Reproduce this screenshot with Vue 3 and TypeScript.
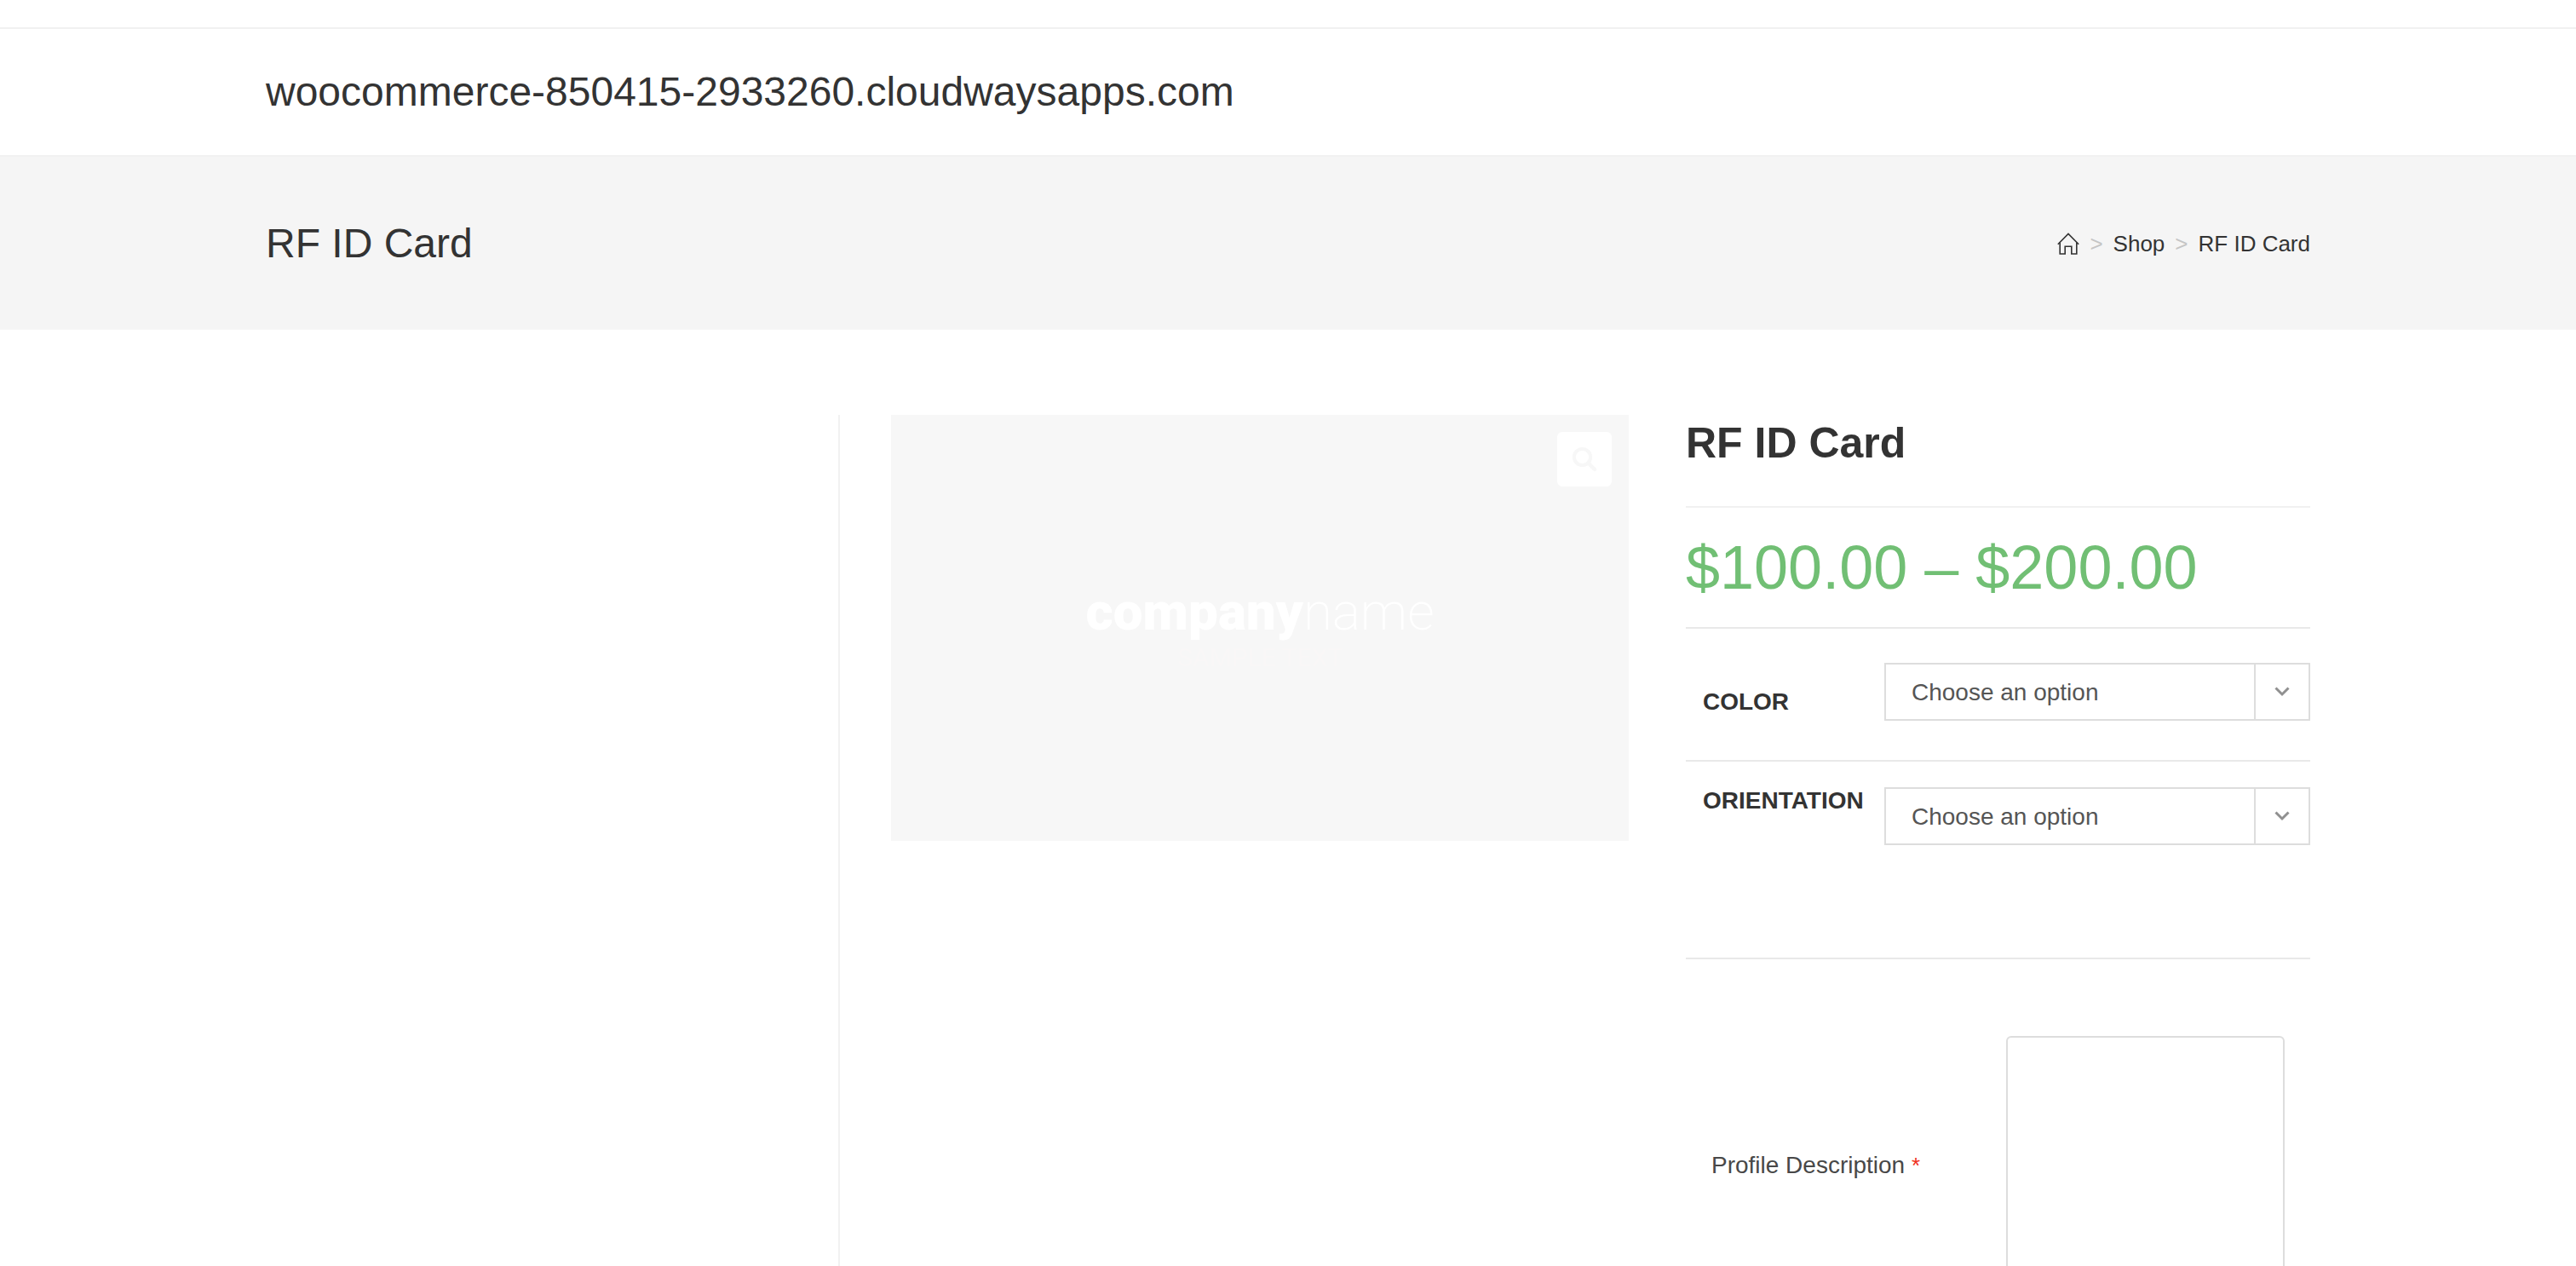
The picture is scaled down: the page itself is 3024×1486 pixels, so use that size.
<script setup lang="ts">
import { ref } from 'vue'

interface Attribute {
  id: string
  label: string
  options: string[]
}

const attributes: Attribute[] = [
  { id: 'color', label: 'COLOR', options: [] },
  { id: 'orientation', label: 'ORIENTATION', options: [] },
]

const selected = ref<Record<string, string>>({ color: '', orientation: '' })
const description = ref('')
</script>

<template>
  <div class="page">
    <div class="top-bar"></div>

    <header class="site-header">
      <div class="container">
        <a class="site-name" href="#">woocommerce-850415-2933260.cloudwaysapps.com</a>
      </div>
    </header>

    <section class="banner">
      <div class="container banner-inner">
        <h1 class="banner-title">RF ID Card</h1>
        <nav class="crumbs" aria-label="Breadcrumb">
          <a class="home" href="#" aria-label="Home">
            <svg width="26" height="26" viewBox="0 0 26 26" fill="none" stroke="#333" stroke-width="1.6">
              <path d="M0.8 13.8 13 1.4 25.2 13.8" />
              <path d="M3.2 11.6V25h6V16.2h7.6V25h6V11.6" />
            </svg>
          </a>
          <span class="sep">&gt;</span>
          <a href="#">Shop</a>
          <span class="sep">&gt;</span>
          <a href="#">RF ID Card</a>
        </nav>
      </div>
    </section>

    <div class="container columns">
      <aside class="sidebar"></aside>
      <main class="product">
        <div class="gallery">
          <div class="logo"><b>company</b><span>name</span></div>
          <div class="sample">SAMPLE TEXT</div>
          <button class="magnify" type="button" aria-label="Zoom image">
            <svg width="30" height="30" viewBox="0 0 30 30" fill="none" stroke="#f7f7f7">
              <circle cx="12.5" cy="12.5" r="9.6" stroke-width="4" />
              <path d="M19.5 19.5 27 27" stroke-width="4.5" stroke-linecap="round" />
            </svg>
          </button>
        </div>

        <div class="summary">
          <h2 class="product-title">RF ID Card</h2>
          <p class="price">$100.00 – $200.00</p>

          <form class="options">
            <div v-for="item in attributes" :key="item.id" class="row" :class="item.id">
              <label :for="item.id">{{ item.label }}</label>
              <div class="select-box">
                <select :id="item.id" v-model="selected[item.id]">
                  <option value="">Choose an option</option>
                  <option v-for="o in item.options" :key="o" :value="o">{{ o }}</option>
                </select>
                <span class="arrow">
                  <svg width="18" height="12" viewBox="0 0 18 12" fill="none" stroke="#909090" stroke-width="3">
                    <path d="M1.5 1.5 9 9 16.5 1.5" />
                  </svg>
                </span>
              </div>
            </div>

            <div class="profile">
              <label for="profile">Profile Description <span class="required">*</span></label>
              <textarea id="profile" v-model="description"></textarea>
            </div>
          </form>
        </div>
      </main>
    </div>
  </div>
</template>

<style>
body {
  background: #fff;
}
</style>

<style scoped>
.page {
  height: 100vh;
  overflow: hidden;
  display: flex;
  flex-direction: column;
  font-family: "Liberation Sans", Arial, sans-serif;
  font-size: 28px;
  line-height: 32px;
  color: #333;
}
.page * {
  box-sizing: border-box;
}
a {
  color: inherit;
  text-decoration: none;
}
.container {
  width: 100%;
  max-width: 2400px;
  margin: 0 auto;
}
.top-bar {
  flex: none;
  height: 34px;
  border-bottom: 2px solid #f1f1f1;
}
.site-header {
  flex: none;
  padding: 46px 0;
  border-bottom: 2px solid #f1f1f1;
}
.site-name {
  display: block;
  font-size: 48px;
  line-height: 56px;
}
.banner {
  flex: none;
  padding: 74px 0 73px;
  background: #f5f5f5;
}
.banner-inner {
  display: flex;
  justify-content: space-between;
  align-items: center;
}
.banner-title {
  margin: 0;
  font-size: 48px;
  line-height: 56px;
  font-weight: 400;
}
.crumbs {
  display: flex;
  align-items: center;
  gap: 12px;
  font-size: 26px;
}
.home svg {
  display: block;
}
.sep {
  color: #c5c5c5;
}
.columns {
  flex: 1;
  min-height: 0;
  display: flex;
  padding-top: 100px;
}
.sidebar {
  width: 28%;
}
.product {
  width: 72%;
  display: flex;
  justify-content: space-between;
  align-items: flex-start;
  padding-left: 60px;
  border-left: 2px solid #f1f1f1;
}
.gallery {
  position: relative;
  width: 52%;
  aspect-ratio: 866 / 500;
  display: flex;
  flex-direction: column;
  align-items: center;
  justify-content: center;
  gap: 6px;
  background: #f7f7f7;
  font-family: Roboto, sans-serif;
}
.logo {
  font-size: 62px;
  line-height: 64px;
  color: #fff;
}
.logo b {
  font-weight: 900;
}
.logo span {
  font-weight: 200;
}
.sample {
  font-size: 30px;
  color: #f9f7f7;
}
.magnify {
  position: absolute;
  top: 20px;
  right: 20px;
  width: 64px;
  height: 64px;
  padding: 0;
  display: flex;
  align-items: center;
  justify-content: center;
  border: 0;
  border-radius: 6px;
  background: #fff;
}
.summary {
  width: 44%;
}
.product-title {
  margin: 0;
  padding-bottom: 41px;
  border-bottom: 2px solid #f1f1f1;
  font-size: 50px;
  line-height: 66px;
  font-weight: 700;
}
.price {
  margin: 0;
  padding: 34px 0;
  border-bottom: 2px solid #e9e9e9;
  font-size: 72px;
  line-height: 72px;
  color: #71bf74;
}
.row {
  display: grid;
  grid-template-columns: 213px 1fr;
  align-items: start;
  padding: 30px 0 132px 20px;
  border-bottom: 2px solid #e9e9e9;
}
.row.color {
  padding-top: 40px;
  padding-bottom: 46px;
}
.row label {
  font-weight: 700;
}
.row.color label {
  padding-top: 30px;
}
.select-box {
  position: relative;
}
select {
  display: block;
  width: 100%;
  height: 68px;
  padding: 2px 80px 0 30px;
  appearance: none;
  border: 2px solid #ddd;
  border-radius: 0;
  background: #fff;
  font: inherit;
  color: #555;
}
.arrow {
  position: absolute;
  top: 2px;
  right: 2px;
  bottom: 2px;
  width: 64px;
  display: flex;
  align-items: center;
  justify-content: center;
  border-left: 2px solid #ddd;
  pointer-events: none;
}
.arrow svg {
  display: block;
}
.profile {
  display: flex;
  justify-content: space-between;
  align-items: center;
  padding: 90px 30px;
}
.profile label {
  color: #484848;
}
.required {
  font-size: 26px;
  color: #f0301c;
}
textarea {
  width: 327px;
  height: 304px;
  padding: 12px 24px;
  border: 2px solid #ddd;
  border-radius: 6px;
  background: #fff;
  resize: none;
  font: inherit;
  color: #333;
}
</style>
